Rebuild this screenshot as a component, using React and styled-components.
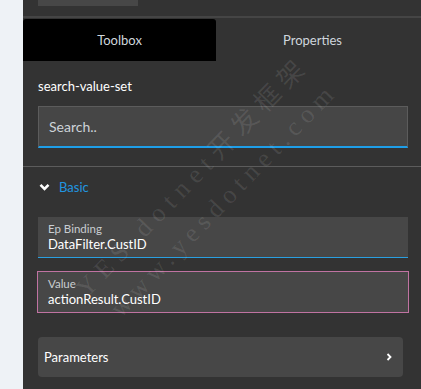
import React from "react";
import styled, { createGlobalStyle } from "styled-components";

const GlobalStyle = createGlobalStyle`
  html, body { margin: 0; padding: 0; background: #333333; }
  * { box-sizing: border-box; }
`;

const Page = styled.div`
  display: flex;
  width: 421px;
  height: 389px;
  overflow: hidden;
  font-family: Lato, "Noto Sans", sans-serif;
`;

const LeftStrip = styled.div`
  width: 23px;
  flex: none;
  background: #eef2f6;
`;

const Panel = styled.div`
  position: relative;
  flex: 1;
  background: #333333;
  display: flex;
  flex-direction: column;
  overflow: hidden;
`;

const TopBar = styled.div`
  height: 18px;
  padding-left: 15px;
  border-bottom: 2px solid #454545;
  flex: none;
`;

const TopBox = styled.div`
  width: 100px;
  height: 6px;
  background: #474747;
`;

const Tabs = styled.div`
  margin-top: 1px;
  width: 386px;
  height: 42px;
  display: grid;
  grid-template-columns: 1fr 1fr;
  flex: none;
`;

const Tab = styled.div`
  display: flex;
  align-items: center;
  justify-content: center;
  font-size: 13px;
  color: #cfd6dd;
  background: ${(p) => (p.$active ? "#000000" : "transparent")};
  border-radius: 3px 3px 0 0;
`;

const Section = styled.div`
  padding: 0 13px 0 15px;
  display: flex;
  flex-direction: column;
`;

const Title = styled.div`
  margin-top: 16px;
  height: 18px;
  line-height: 18px;
  font-size: 13px;
  color: #ffffff;
`;

const SearchBox = styled.div`
  margin-top: 11px;
  height: 42px;
  background: #464646;
  border: 1px solid #5c5c5c;
  border-bottom: 2px solid #1e9ee8;
  display: flex;
  align-items: center;
  padding-left: 10px;
  font-size: 14px;
  color: #cdd3d8;
`;

const Divider = styled.div`
  margin-top: 18px;
  height: 1px;
  background: #5c5c5c;
  flex: none;
`;

const GroupHeader = styled.div`
  margin-top: 11px;
  height: 18px;
  display: flex;
  align-items: center;
  gap: 9px;
  padding-left: 1px;
  font-size: 13px;
  color: #2196e0;
`;

const Field = styled.div`
  margin-top: ${(p) => p.$mt}px;
  height: ${(p) => p.$h}px;
  background: #474747;
  display: flex;
  flex-direction: column;
  justify-content: center;
  padding-left: 10px;
  border-bottom: ${(p) => (p.$outlined ? "none" : "1px solid #2a9fe0")};
  outline: ${(p) => (p.$outlined ? "1px solid #c073a2" : "none")};
`;

const FieldLabel = styled.div`
  font-size: 11.5px;
  line-height: 15px;
  color: #c9cdd1;
`;

const FieldValue = styled.div`
  font-size: 13px;
  line-height: 17px;
  color: #ffffff;
`;

const Collapsible = styled.div`
  margin-top: 25px;
  margin-right: 5px;
  height: 40px;
  background: #474747;
  border-radius: 4px;
  display: flex;
  align-items: center;
  justify-content: space-between;
  padding: 0 11px 0 6px;
  font-size: 13px;
  color: #ffffff;
`;

const Watermark = styled.div`
  position: absolute;
  left: ${(p) => p.$x}px;
  top: ${(p) => p.$y}px;
  transform: rotate(-46deg);
  transform-origin: left center;
  font-family: "Liberation Serif", "Noto Sans CJK SC", serif;
  font-size: 26px;
  line-height: 26px;
  color: rgba(255, 255, 255, 0.1);
  white-space: nowrap;
  pointer-events: none;
  letter-spacing: ${(p) => p.$ls}px;
`;

const ChevronDown = () => (
  <svg width="11" height="8" viewBox="0 0 11 8">
    <polyline points="1.5,1.8 5.5,5.8 9.5,1.8" fill="none" stroke="#ffffff" strokeWidth="2.6" />
  </svg>
);

const ChevronRight = () => (
  <svg width="6" height="8" viewBox="0 0 6 8">
    <polyline points="1.5,1 4.5,4 1.5,7" fill="none" stroke="#ffffff" strokeWidth="1.8" />
  </svg>
);

export default function App() {
  return (
    <>
      <GlobalStyle />
      <Page>
        <LeftStrip />
        <Panel>
          <TopBar>
            <TopBox />
          </TopBar>
          <Tabs>
            <Tab $active>Toolbox</Tab>
            <Tab>Properties</Tab>
          </Tabs>
          <Section>
            <Title>search-value-set</Title>
            <SearchBox>Search..</SearchBox>
          </Section>
          <Divider />
          <Section>
            <GroupHeader>
              <ChevronDown />
              <span>Basic</span>
            </GroupHeader>
            <Field $mt={21} $h={41}>
              <FieldLabel>Ep Binding</FieldLabel>
              <FieldValue>DataFilter.CustID</FieldValue>
            </Field>
            <Field $mt={14} $h={40} $outlined>
              <FieldLabel>Value</FieldLabel>
              <FieldValue>actionResult.CustID</FieldValue>
            </Field>
            <Collapsible>
              <span>Parameters</span>
              <ChevronRight />
            </Collapsible>
          </Section>
          <Watermark $x={58} $y={280} $ls={7}>YES dotnet开发框架</Watermark>
          <Watermark $x={92} $y={300} $ls={6}>www.yesdotnet.com</Watermark>
        </Panel>
      </Page>
    </>
  );
}
